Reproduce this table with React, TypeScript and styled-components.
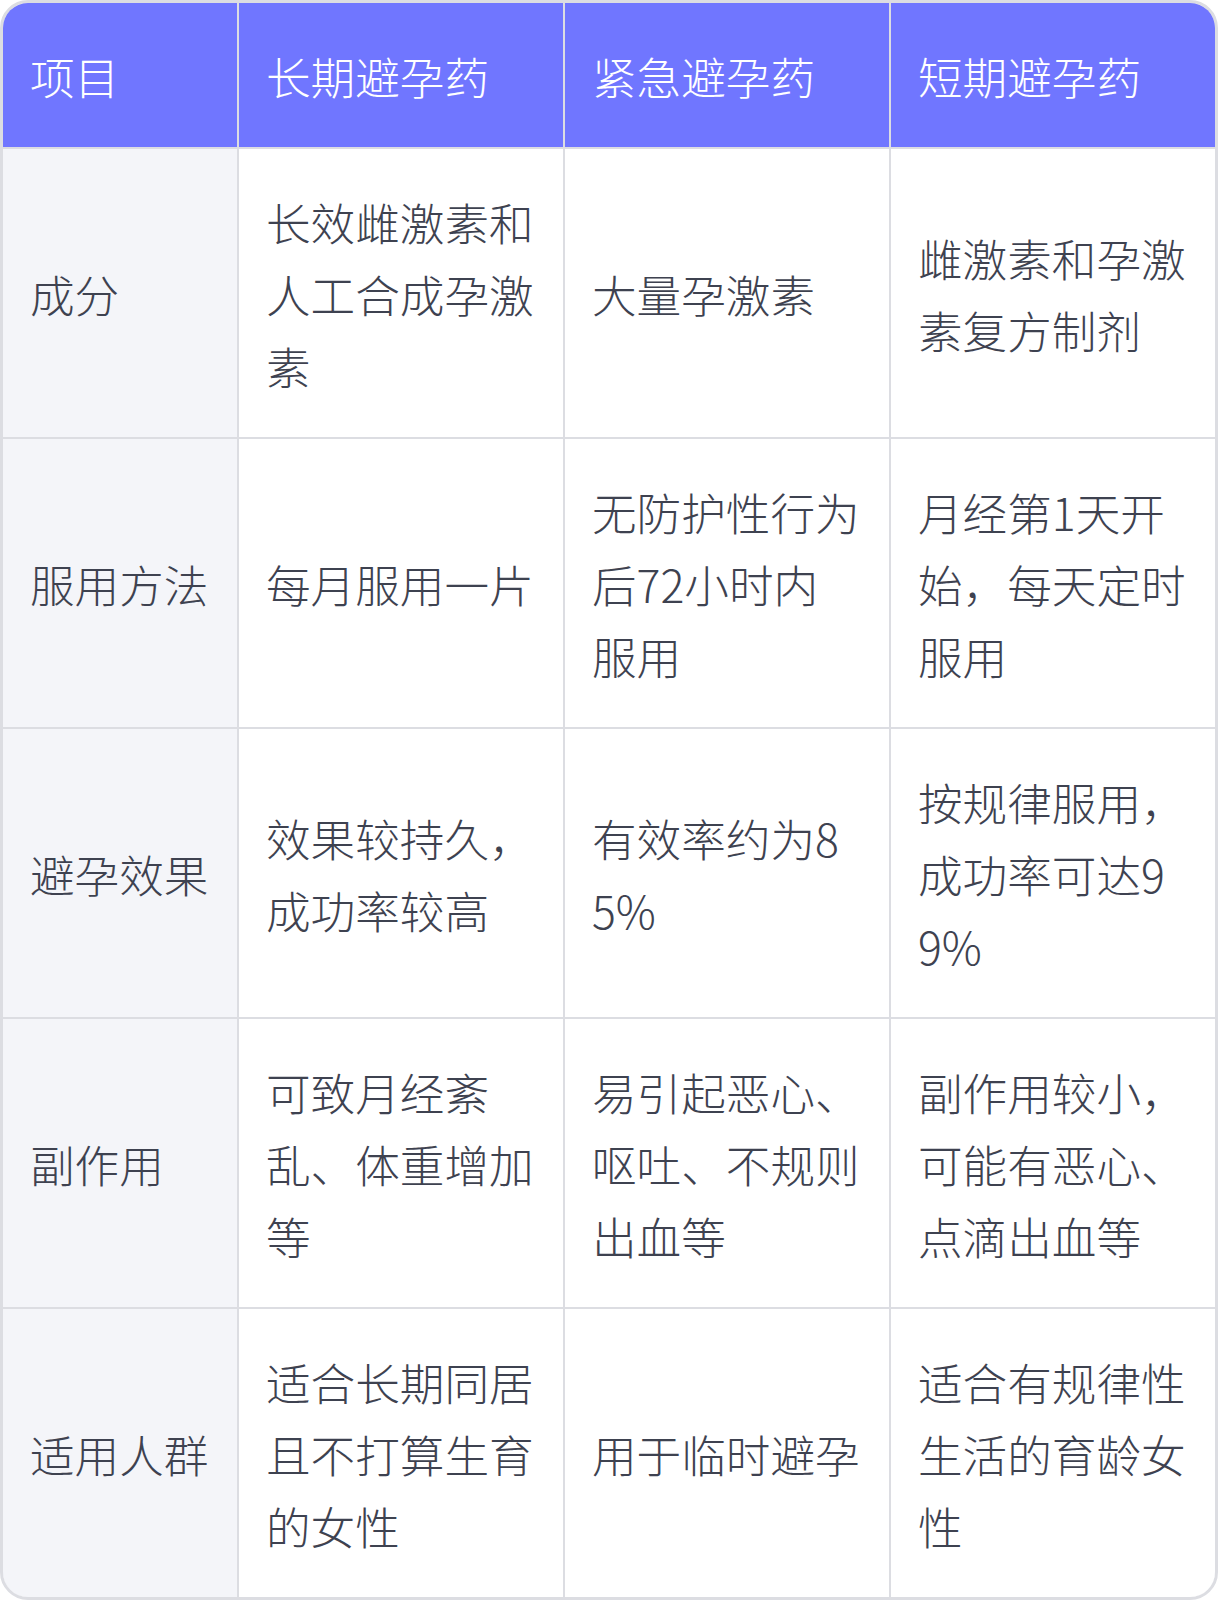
import React from 'react';
import styled, { createGlobalStyle } from 'styled-components';

const GlobalStyle = createGlobalStyle`
  html, body {
    margin: 0;
    padding: 0;
    background: #ffffff;
  }
  body {
    font-family: "Noto Sans CJK SC", "Noto Sans", sans-serif;
  }
`;

const headers = ['项目', '长期避孕药', '紧急避孕药', '短期避孕药'];

const rows: string[][] = [
  ['成分', '长效雌激素和人工合成孕激素', '大量孕激素', '雌激素和孕激素复方制剂'],
  ['服用方法', '每月服用一片', '无防护性行为后72小时内服用', '月经第1天开始，每天定时服用'],
  ['避孕效果', '效果较持久，成功率较高', '有效率约为85%', '按规律服用，成功率可达99%'],
  ['副作用', '可致月经紊乱、体重增加等', '易引起恶心、呕吐、不规则出血等', '副作用较小，可能有恶心、点滴出血等'],
  ['适用人群', '适合长期同居且不打算生育的女性', '用于临时避孕', '适合有规律性生活的育龄女性'],
];

const Frame = styled.div`
  width: 1218px;
  box-sizing: border-box;
  border: 3px solid #dcdde2;
  border-radius: 28px;
  overflow: hidden;
`;

const Grid = styled.div`
  display: grid;
  grid-template-columns: 234px 324px 324px 324px;
  gap: 2px;
  background: #dcdde2;
`;

const Cell = styled.div<{ $variant: 'head' | 'label' | 'body' }>`
  display: flex;
  align-items: center;
  box-sizing: border-box;
  padding: 37px 27px 35px;
  font-size: 44.6px;
  font-weight: 300;
  line-height: 72px;
  word-break: break-all;
  background: ${p => (p.$variant === 'head' ? '#7076ff' : p.$variant === 'label' ? '#f4f5f9' : '#ffffff')};
  color: ${p => (p.$variant === 'head' ? '#ffffff' : '#3e4250')};
  min-height: ${p => (p.$variant === 'head' ? '144px' : '288px')};
`;

export default function App() {
  return (
    <>
      <GlobalStyle />
      <Frame>
        <Grid>
          {headers.map(h => (
            <Cell key={h} $variant="head">{h}</Cell>
          ))}
          {rows.map(row =>
            row.map((text, i) => (
              <Cell key={row[0] + i} $variant={i === 0 ? 'label' : 'body'}>
                {text}
              </Cell>
            ))
          )}
        </Grid>
      </Frame>
    </>
  );
}
